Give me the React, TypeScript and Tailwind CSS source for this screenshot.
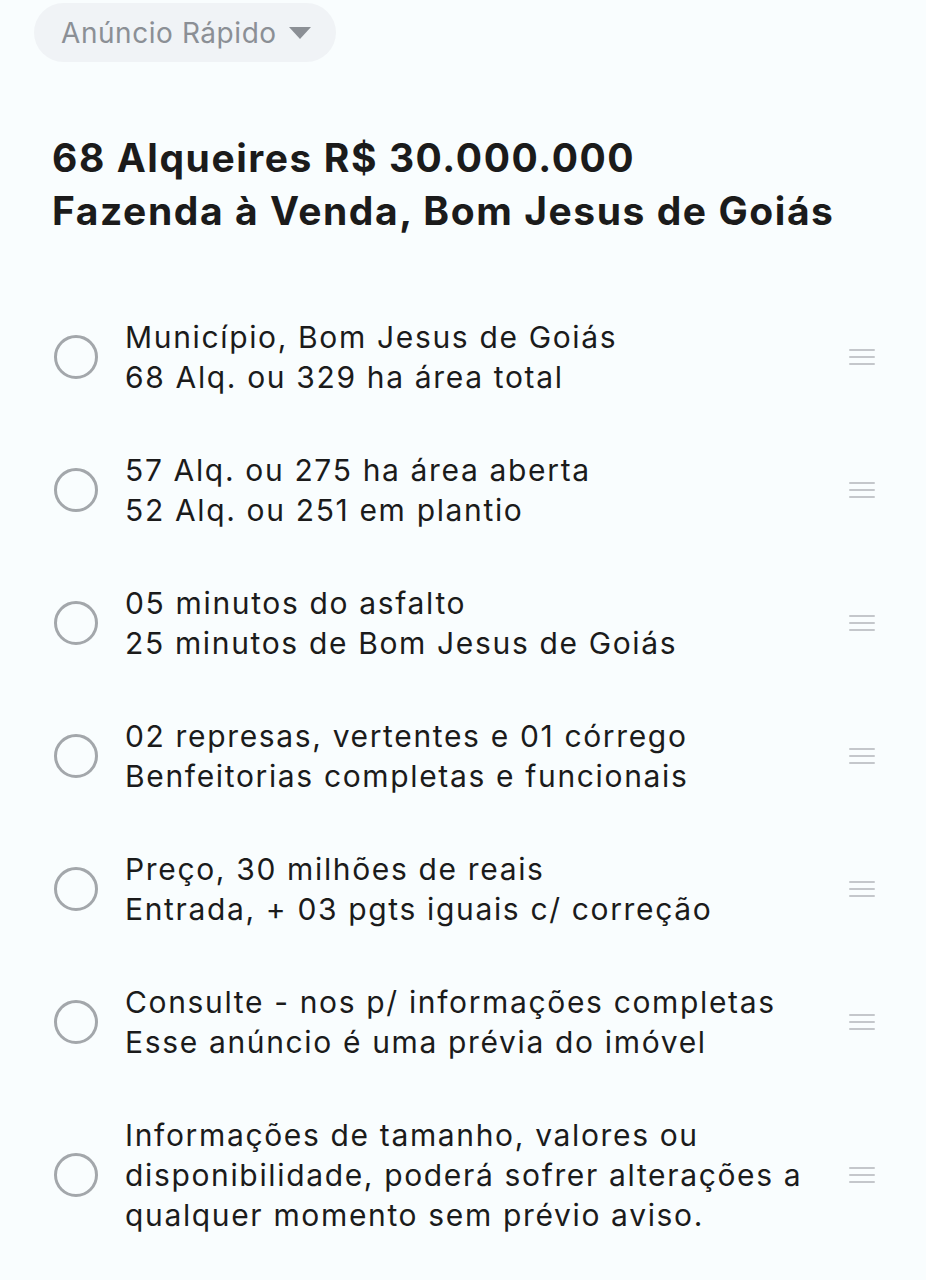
const items: string[][] = [
  ['Município, Bom Jesus de Goiás', '68 Alq. ou 329 ha área total'],
  ['57 Alq. ou 275 ha área aberta', '52 Alq. ou 251 em plantio'],
  ['05 minutos do asfalto', '25 minutos de Bom Jesus de Goiás'],
  ['02 represas, vertentes e 01 córrego', 'Benfeitorias completas e funcionais'],
  ['Preço, 30 milhões de reais', 'Entrada, + 03 pgts iguais c/ correção'],
  ['Consulte - nos p/ informações completas', 'Esse anúncio é uma prévia do imóvel'],
  [
    'Informações de tamanho, valores ou',
    'disponibilidade, poderá sofrer alterações a',
    'qualquer momento sem prévio aviso.',
  ],
]

function Handle() {
  return (
    <div className="flex w-[26px] shrink-0 flex-col gap-[5px]">
      <span className="h-[2px] rounded bg-[#c4c7cb]" />
      <span className="h-[2px] rounded bg-[#c4c7cb]" />
      <span className="h-[2px] rounded bg-[#c4c7cb]" />
    </div>
  )
}

export default function App() {
  return (
    <div className="min-h-[1280px] bg-[#f9fdfe] font-['Inter',sans-serif] text-[#1b1b1b]">
      <div className="px-[34px] pt-[3px]">
        <button className="flex h-[59px] items-center gap-[12px] rounded-full bg-[#f0f3f6] pl-[27px] pr-[25px] text-[28px] tracking-[0.02em] text-[#8b8f95]">
          Anúncio Rápido
          <svg width="22" height="12" viewBox="0 0 22 12">
            <path d="M0 0h22L11 12z" fill="#8b8f95" />
          </svg>
        </button>
      </div>

      <h1 className="mt-[69px] px-[52px] text-[39px] font-bold leading-[53px] tracking-[0.04em]">
        68 Alqueires R$ 30.000.000
        <br />
        Fazenda à Venda, Bom Jesus de Goiás
      </h1>

      <ul className="mt-[80px] flex flex-col gap-[53px] pl-[54px] pr-[51px]">
        {items.map((lines, i) => (
          <li key={i} className="flex items-center">
            <span className="h-[44px] w-[44px] shrink-0 rounded-full border-[3px] border-[#a3a7ab]" />
            <div className="ml-[27px] flex-1 text-[30px] leading-[40px] tracking-[0.055em]">
              {lines.map((l) => (
                <div key={l} className="whitespace-nowrap">
                  {l}
                </div>
              ))}
            </div>
            <Handle />
          </li>
        ))}
      </ul>
    </div>
  )
}
